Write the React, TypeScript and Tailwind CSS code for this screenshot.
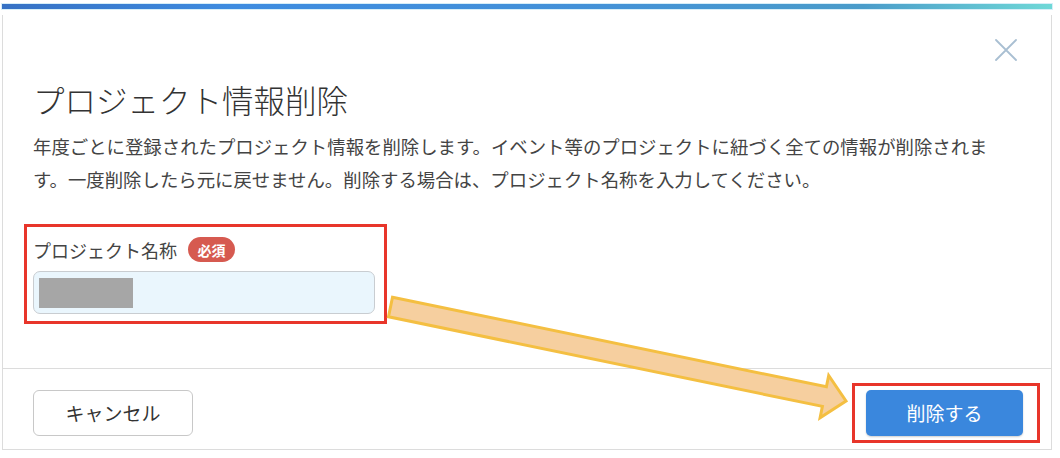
import React from "react";

const FONT = "font-['Noto_Sans_CJK_JP','Noto_Sans',sans-serif]";

function CloseIcon() {
  return (
    <svg width="22" height="22" viewBox="0 0 22 22" aria-hidden="true">
      <path
        d="M1 1 L21 21 M21 1 L1 21"
        stroke="#a9bfd2"
        strokeWidth="1.8"
        strokeLinecap="round"
        fill="none"
      />
    </svg>
  );
}

function AnnotationArrow() {
  // points worked out from the screenshot: tail at the field, tip at the delete button
  return (
    <svg
      className="pointer-events-none absolute left-0 top-0"
      width="1060"
      height="458"
      viewBox="0 0 1060 458"
      aria-hidden="true"
    >
      <polygon
        points="392.5,297.2 826.4,386.8 828.7,375.5 846,401 820.1,417.7 822.4,406.4 388.5,316.8"
        fill="#f6cf9f"
        stroke="#f4bf42"
        strokeWidth="3"
        strokeLinejoin="miter"
      />
    </svg>
  );
}

export default function App() {
  return (
    <div className={`relative h-[458px] w-[1060px] overflow-hidden bg-white ${FONT}`}>
      <div className="ml-[2px] mt-[4px] h-[5px] w-[1050px] bg-[linear-gradient(90deg,#3671c4_0%,#3e8ce0_22%,#4391d8_55%,#4a9cca_82%,#6fd8d7_100%)] shadow-[0_0_0_1px_#d6eef8]" />

      <div className="ml-[2px] mt-[6px] w-[1050px] border-x border-b border-[#dcdcdc]">
        <div className="pl-[30px] pr-[28px] pb-[54px]">
          <div className="flex justify-end pr-[6px] pt-[24px]">
            <CloseIcon />
          </div>

          <h2 className="mt-[18px] text-[31.5px] leading-[40px] font-light text-[#333]">
            プロジェクト情報削除
          </h2>

          <p className="mt-[11px] w-[980px] text-[18.4px] leading-[33px] text-[#444]">
            年度ごとに登録されたプロジェクト情報を削除します。イベント等のプロジェクトに紐づく全ての情報が削除されます。一度削除したら元に戻せません。削除する場合は、プロジェクト名称を入力してください。
          </p>

          <div className="relative mt-[41px] w-[342px]">
            <div className="pointer-events-none absolute -left-[9px] -right-[12px] -top-[13px] -bottom-[10px] border-[3px] border-[#e8352a]" />
            <div className="flex h-[25px] items-center gap-[11px]">
              <span className="text-[18px] leading-none text-[#444]">
                プロジェクト名称
              </span>
              <span className="flex h-[25px] w-[47px] items-center justify-center rounded-full bg-[#d65a50] text-[14px] font-bold leading-none text-white">
                必須
              </span>
            </div>
            <div className="mt-[9px] flex h-[43px] items-center rounded-[7px] border border-[#c9cdd1] bg-[#eaf6fd] pl-[5px]">
              <div className="h-[30px] w-[94px] bg-[#a6a6a6]" />
            </div>
          </div>
        </div>

        <div className="flex items-center justify-between border-t border-[#dcdcdc] pb-[13px] pl-[30px] pr-[28px] pt-[21px]">
          <button className="h-[46px] w-[160px] rounded-[6px] border border-[#c8c8c8] bg-white text-[19px] text-[#333]">
            キャンセル
          </button>
          <div className="relative">
            <div className="pointer-events-none absolute -bottom-[7px] -left-[14px] -right-[17px] -top-[7px] border-[3px] border-[#e8352a]" />
            <button className="h-[46px] w-[157px] rounded-[5px] bg-[#3a87dd] text-[19px] text-white shadow-[0_1px_2px_rgba(0,0,0,0.2)]">
              削除する
            </button>
          </div>
        </div>
      </div>

      <AnnotationArrow />
    </div>
  );
}
